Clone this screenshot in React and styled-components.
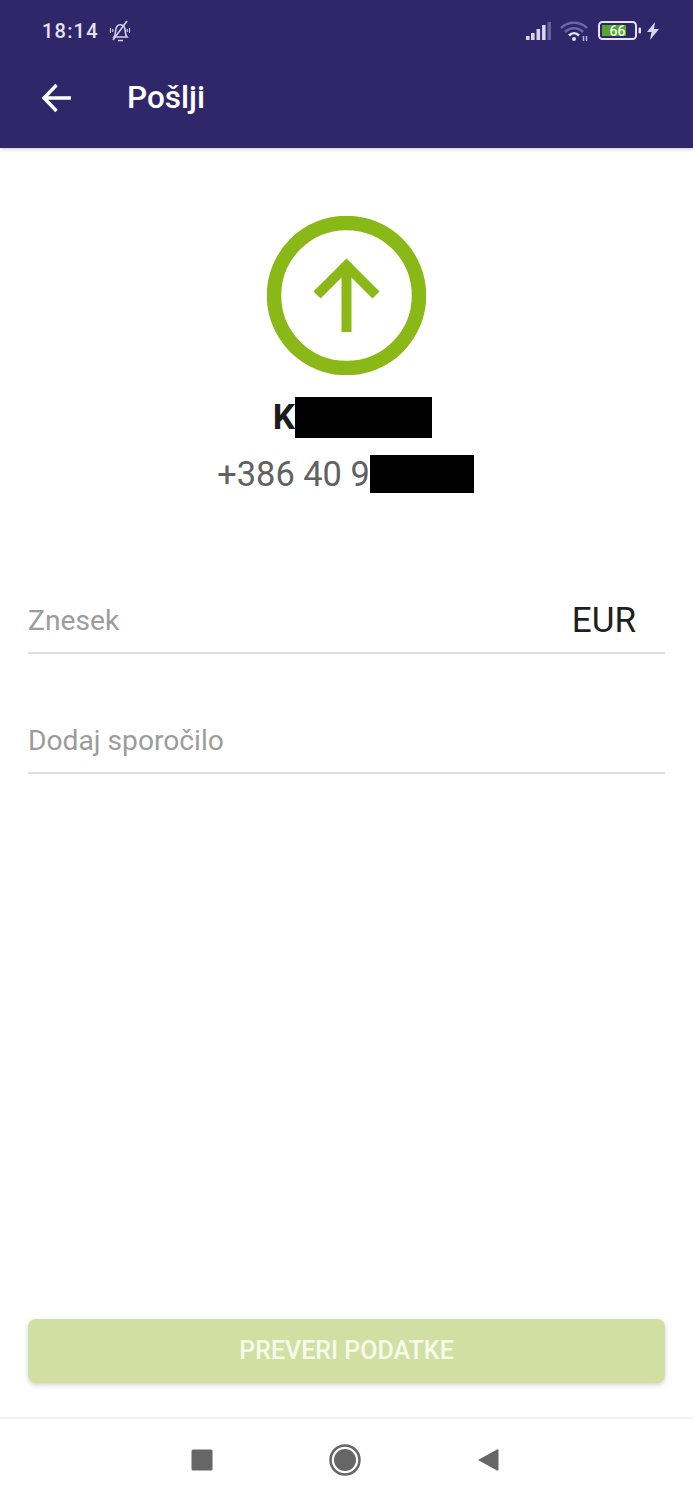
import React from "react"
import styled, { createGlobalStyle } from "styled-components"

const GlobalStyle = createGlobalStyle`
  html, body {
    margin: 0;
    padding: 0;
    background: #fff;
  }
  body {
    font-family: Roboto, "Liberation Sans", sans-serif;
  }
`

const Page = styled.div`
  width: 693px;
  height: 1500px;
  display: flex;
  flex-direction: column;
  background: #fff;
  overflow: hidden;
`

const Header = styled.header`
  height: 148px;
  flex: none;
  box-sizing: border-box;
  background: #2f2769;
  box-shadow: 0 1px 4px rgba(0, 0, 0, 0.22);
  position: relative;
  display: flex;
  flex-direction: column;
`

const StatusBar = styled.div`
  height: 62px;
  box-sizing: border-box;
  padding: 0 34px 0 42px;
  display: flex;
  align-items: center;
  justify-content: space-between;
`

const StatusLeft = styled.div`
  display: flex;
  align-items: center;
  gap: 10px;
`

const StatusRight = styled.div`
  display: flex;
  align-items: center;
  gap: 9px;
`

const Clock = styled.span`
  font-size: 20px;
  font-weight: 500;
  letter-spacing: 1.2px;
  color: #e6e1f2;
`

const TitleRow = styled.div`
  display: flex;
  align-items: center;
  padding: 0 0 0 41px;
  height: 72px;
`

const Title = styled.h1`
  margin: 0 0 2px 56px;
  font-size: 31.5px;
  font-weight: 500;
  color: #fff;
`

const Main = styled.main`
  flex: 1;
  display: flex;
  flex-direction: column;
  padding: 0 28px;
`

const Contact = styled.section`
  display: flex;
  flex-direction: column;
  align-items: center;
  padding-top: 68px;
`

const Name = styled.div`
  margin: 21px 0 0 12px;
  display: flex;
  align-items: center;
  height: 42px;
  font-size: 35px;
  font-weight: 700;
  color: #1c1c1c;
`

const Phone = styled.div`
  margin: 16px 2px 0 0;
  display: flex;
  align-items: center;
  height: 40px;
  font-size: 34.4px;
  color: #616161;
`

const Redacted = styled.span`
  display: block;
  background: #000;
  width: ${props => props.w}px;
  height: ${props => props.h}px;
`

const Field = styled.div`
  height: ${props => props.h}px;
  margin-top: ${props => props.top}px;
  box-sizing: border-box;
  border-bottom: 2px solid #dedede;
  display: flex;
  align-items: center;
  justify-content: space-between;
  padding: 0 29px 1px 0;
`

const Placeholder = styled.span`
  font-size: 28.2px;
  color: #9c9c9c;
`

const Currency = styled.span`
  font-size: 35px;
  color: #1f1f1f;
`

const Button = styled.button`
  margin-top: auto;
  margin-bottom: 34px;
  height: 64px;
  flex: none;
  border: 0;
  border-radius: 8px;
  padding: 0 0 2px;
  background: #d1e0a2;
  box-shadow: 0 2px 5px rgba(0, 0, 0, 0.18);
  color: #f7faec;
  font-family: inherit;
  font-size: 25px;
  font-weight: 500;
`

const NavBar = styled.nav`
  height: 83px;
  flex: none;
  box-sizing: border-box;
  border-top: 2px solid #f3f3f3;
  display: flex;
  align-items: center;
  justify-content: center;
  gap: 116px;
  padding: 1px 3px 0 0;
`

const ArrowLeft = () => (
  <svg width="30" height="30" viewBox="0 0 30 30" fill="none" stroke="#fff" strokeWidth="3.4">
    <path d="M30 15H3M15.500 2 3 15l12.500 13" />
  </svg>
)

const MutedBell = () => (
  <svg width="22" height="24" viewBox="0 0 22 24" fill="none" stroke="#d6cfe8" strokeWidth="1.600">
    <path d="M5 18c1.500-1.500 1.300-4 1.700-7 .5-3.500 2.500-5.500 4.800-5.300 2.700.2 4.300 2.300 4.600 5.300.3 3 .4 5.500 1.900 7H5Z" />
    <path d="M9 21.500h5M4 21 18 2" />
    <path d="M1.500 9v5M20.500 9v5M3.800 10v3M18.200 10v3" strokeWidth="1.100" />
  </svg>
)

const Signal = () => (
  <svg width="25" height="20" viewBox="0 0 25 20">
    <rect x="0" y="15" width="3.600" height="4" fill="#d9d4ea" />
    <rect x="5" y="12" width="3.600" height="7" fill="#d9d4ea" />
    <rect x="10.500" y="8" width="3.600" height="11" fill="#d9d4ea" />
    <rect x="16" y="4" width="3.600" height="15" fill="#d9d4ea" />
    <rect x="21.500" y="1" width="3.500" height="18" fill="#6a5f9e" />
  </svg>
)

const Wifi = () => (
  <svg width="29" height="22" viewBox="0 0 29 22" fill="none">
    <path d="M1 8c7-7 19-7 26 0" stroke="#6f63a6" strokeWidth="2.500" />
    <path d="M5 12c5-5 13-5 18 0" stroke="#6f63a6" strokeWidth="2.500" />
    <path d="M9 15.500c3-3 7-3 10 0" stroke="#e6e1f2" strokeWidth="2.500" />
    <circle cx="14" cy="19" r="2" fill="#e6e1f2" />
    <path d="M23.500 16v5M26.500 16v5" stroke="#b9b2d6" strokeWidth="1.500" />
  </svg>
)

const Battery = () => (
  <svg width="43" height="20" viewBox="0 0 43 20">
    <rect x="1" y="1" width="37" height="17" rx="3.500" fill="none" stroke="#e6e1f2" strokeWidth="2" />
    <rect x="4" y="4" width="24" height="11" fill="#55a630" />
    <text x="19.500" y="14.500" textAnchor="middle" fontFamily="Roboto, sans-serif" fontSize="14" fontWeight="500" fill="#eef6e6">66</text>
    <rect x="40.500" y="6.500" width="2.500" height="6" rx="1" fill="#e6e1f2" />
  </svg>
)

const BoltSvg = styled.svg`
  margin-left: -3px;
`

const Bolt = () => (
  <BoltSvg width="12" height="18" viewBox="0 0 12 18">
    <path d="M8 0 0 10h4.500L3 18l9-11H7l1-7Z" fill="#d9d4ea" />
  </BoltSvg>
)

const SendBadge = () => (
  <svg width="159" height="159" viewBox="0 0 159 159" fill="none" stroke="#8ab917">
    <circle cx="79.500" cy="79.500" r="72.500" strokeWidth="14.500" />
    <path d="M79.500 116V47" strokeWidth="10" />
    <path d="M50 79l29.500-29.500L109 79" strokeWidth="10" />
  </svg>
)

const RecentsIcon = () => (
  <svg width="22" height="22" viewBox="0 0 22 22">
    <rect x="0.500" y="0.500" width="21" height="21" rx="1.500" fill="#666" />
  </svg>
)

const HomeIcon = () => (
  <svg width="32" height="32" viewBox="0 0 32 32">
    <circle cx="16" cy="16" r="14.500" fill="none" stroke="#666" strokeWidth="2.500" />
    <circle cx="16" cy="16" r="11" fill="#666" />
  </svg>
)

const BackIcon = () => (
  <svg width="22" height="24" viewBox="0 0 22 24">
    <path d="M20 1.500c.8-.4 1.500 0 1.500 1v19c0 1-.7 1.400-1.500 1L1 12 20 1.500Z" fill="#666" />
  </svg>
)

export default function App() {
  return (
    <Page>
      <GlobalStyle />
      <Header>
        <StatusBar>
          <StatusLeft>
            <Clock>18:14</Clock>
            <MutedBell />
          </StatusLeft>
          <StatusRight>
            <Signal />
            <Wifi />
            <Battery />
            <Bolt />
          </StatusRight>
        </StatusBar>
        <TitleRow>
          <ArrowLeft />
          <Title>Pošlji</Title>
        </TitleRow>
      </Header>
      <Main>
        <Contact>
          <SendBadge />
          <Name>
            K
            <Redacted w={137} h={41} />
          </Name>
          <Phone>
            +386 40 9
            <Redacted w={104} h={38} />
          </Phone>
        </Contact>
        <Field h={65} top={95}>
          <Placeholder>Znesek</Placeholder>
          <Currency>EUR</Currency>
        </Field>
        <Field h={65} top={55}>
          <Placeholder>Dodaj sporočilo</Placeholder>
        </Field>
        <Button>PREVERI PODATKE</Button>
      </Main>
      <NavBar>
        <RecentsIcon />
        <HomeIcon />
        <BackIcon />
      </NavBar>
    </Page>
  )
}
